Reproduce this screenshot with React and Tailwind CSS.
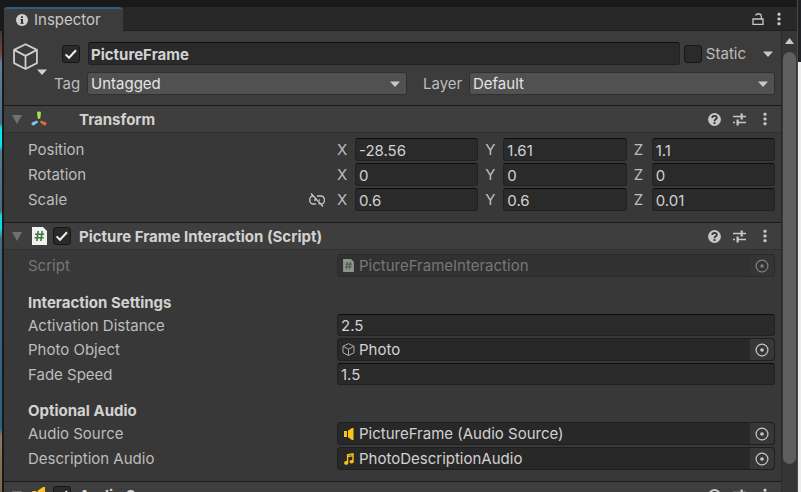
import React from "react";

const fieldBox =
  "rounded-[3px] border border-[#212121] border-t-[#0d0d0d] bg-[#2a2a2a] text-[#d2d2d2]";

function Caret({ className = "" }) {
  return (
    <svg className={"shrink-0 " + className} width="10" height="6" viewBox="0 0 10 6" aria-hidden="true">
      <path d="M0 0.5H10L5 6Z" fill="currentColor" />
    </svg>
  );
}

function Cube({ size, stroke, className = "" }) {
  return (
    <svg className={"shrink-0 " + className} width={size} height={size} viewBox="0 0 26 26" fill="none" stroke="currentColor" strokeWidth={stroke} strokeLinejoin="round" aria-hidden="true">
      <path d="M13 1.2L24 6.6V19.4L13 25L2 19.4V6.6Z" />
      <path d="M2 6.6L13 12.4L24 6.6M13 12.4V25" />
    </svg>
  );
}

function Dots() {
  return (
    <svg width="4" height="14" viewBox="0 0 4 14" fill="currentColor" aria-hidden="true">
      <rect x="0.5" y="0.8" width="3" height="3" rx="1" />
      <rect x="0.5" y="5.5" width="3" height="3" rx="1" />
      <rect x="0.5" y="10.2" width="3" height="3" rx="1" />
    </svg>
  );
}

function ScriptIcon({ width, height, dim }) {
  return (
    <svg className="shrink-0" width={width} height={height} viewBox="0 0 15 18" aria-hidden="true">
      <path d="M0 0H11L15 4V18H0Z" fill={dim ? "#8f948f" : "#eef1ec"} />
      <path d="M6.2 4L4.8 14M10.2 4L8.8 14M3 7.2H12.2M2.6 10.8H11.8" stroke={dim ? "#4d5f50" : "#3c7a45"} strokeWidth="1.6" fill="none" />
    </svg>
  );
}

function Speaker({ width, height }) {
  return (
    <svg className="shrink-0" width={width} height={height} viewBox="0 0 10 12" fill="#fcc419" aria-hidden="true">
      <path d="M0 3H3V9H0Z" />
      <path d="M4 2.8L8 0H9.5V12H8L4 9.2Z" />
    </svg>
  );
}

function Note() {
  return (
    <svg className="shrink-0" width="10" height="12" viewBox="0 0 10 12" aria-hidden="true">
      <path d="M3.6 9.6V1.9L9 0.9V8.6M3.6 3.6L9 2.6" stroke="#fcc419" strokeWidth="1.4" fill="none" />
      <ellipse cx="2.2" cy="9.9" rx="2.1" ry="1.9" fill="#fcc419" />
      <ellipse cx="7.6" cy="8.7" rx="2.1" ry="1.8" fill="#fcc419" />
    </svg>
  );
}

function TransformIcon() {
  return (
    <svg width="16" height="16" viewBox="0 0 16 16" aria-hidden="true">
      <path d="M6 1.6Q6 0.6 8 0.6Q10 0.6 10 1.6L9.2 7.8H6.8Z" fill="#a8e34d" />
      <path d="M5.9 9.4L7.2 11.3L3 14.3Q1.6 14.8 0.7 13.6Q0 12.3 1 11.6Z" fill="#7cc8ee" />
      <path d="M10.1 9.4L8.8 11.3L13 14.3Q14.4 14.8 15.3 13.6Q16 12.3 15 11.6Z" fill="#e2683f" />
    </svg>
  );
}

function Check({ label, checked }) {
  return (
    <label className="grid size-[18px] shrink-0">
      <input
        type="checkbox"
        aria-label={label}
        defaultChecked={checked}
        className="peer col-start-1 row-start-1 size-[18px] appearance-none rounded-[3px] border border-[#171717] bg-[#2a2a2a]"
      />
      <svg className="pointer-events-none invisible col-start-1 row-start-1 size-[18px] peer-checked:visible" viewBox="0 0 18 18" fill="none" stroke="#f0f0f0" strokeWidth="2" aria-hidden="true">
        <path d="M3.6 9.4L7 12.8L14 5.2" />
      </svg>
    </label>
  );
}

function Dropdown({ id, value, className }) {
  return (
    <div className={"grid min-w-0 " + className}>
      <select
        id={id}
        defaultValue={value}
        className="col-start-1 row-start-1 h-[23px] w-full appearance-none rounded-[3px] border border-[#303030] bg-[#515151] pl-[3px] leading-5 text-[#e4e4e4]"
      >
        <option>{value}</option>
      </select>
      <Caret className="pointer-events-none col-start-1 row-start-1 mr-[7px] self-center justify-self-end text-[#c8c8c8]" />
    </div>
  );
}

function Section({ title, icon, enabled, children }) {
  return (
    <section>
      <header className="flex h-7 items-center border-y border-t-[#1a1a1a] border-b-[#303030] bg-[#3e3e3e] pl-2 pr-[14px]">
        <button type="button" aria-label={"Fold " + title} className="text-[#707070]">
          <svg width="10" height="9" viewBox="0 0 10 9" aria-hidden="true">
            <path d="M0 0H10L5 9Z" fill="currentColor" />
          </svg>
        </button>
        <span className="ml-2 flex w-[18px] shrink-0 justify-center">{icon}</span>
        <span className="ml-[5px] w-[26px] shrink-0">
          {enabled && <Check label={"Enable " + title} checked />}
        </span>
        <h2 className="flex-1 pt-px font-bold whitespace-nowrap text-[#d2d2d2]">{title}</h2>
        <div className="flex items-center text-[#c8c8c8]">
          <button type="button" aria-label="Help">
            <svg width="13" height="13" viewBox="0 0 13 13" aria-hidden="true">
              <circle cx="6.5" cy="6.5" r="6.4" fill="currentColor" />
              <path d="M4.2 5C4.2 2.2 8.8 2.2 8.8 4.8C8.8 6.4 6.5 6.3 6.5 8.2" stroke="#333333" strokeWidth="1.8" fill="none" />
              <rect x="5.5" y="9.2" width="2" height="1.8" fill="#333333" />
            </svg>
          </button>
          <button type="button" aria-label="Presets" className="ml-3">
            <svg width="13" height="13" viewBox="0 0 13 13" stroke="currentColor" fill="none" aria-hidden="true">
              <path d="M0 3.5H8M10 3.5H13M0 9.5H2M4.5 9.5H13" strokeWidth="1.5" />
              <path d="M8.7 0.5V6.5M4.6 6.5V12.5" strokeWidth="2.2" />
            </svg>
          </button>
          <button type="button" aria-label={title + " menu"} className="ml-[17px]">
            <Dots />
          </button>
        </div>
      </header>
      {children}
    </section>
  );
}

function Vector({ label, values, unlinked }) {
  return (
    <div className="flex h-[23px] items-center">
      <div className="flex w-[309px] shrink-0 items-center justify-between pr-3">
        <span>{label}</span>
        {unlinked && (
          <button type="button" aria-label="Constrain proportions" className="text-[#c4c4c4]">
            <svg width="16" height="14" viewBox="0 0 16 14" fill="none" stroke="currentColor" strokeWidth="1.4" aria-hidden="true">
              <path d="M5 3H4A3.3 4 0 0 0 4 11H7M8 3H12A3.3 4 0 0 1 12.4 11M9.5 11H10.5M5 7H7M10 7H11M2 0.5L14 13.5" />
            </svg>
          </button>
        )}
      </div>
      <div className="grid flex-1 grid-cols-3 gap-x-[7px]">
        {["X", "Y", "Z"].map((axis, i) => (
          <label key={axis} className="flex min-w-0 items-center">
            <span className="w-[18px] shrink-0">{axis}</span>
            <input
              aria-label={label + " " + axis}
              defaultValue={values[i]}
              className={"h-[23px] w-full min-w-0 flex-1 px-[3px] pt-[2px] " + fieldBox}
            />
          </label>
        ))}
      </div>
    </div>
  );
}

function NumberRow({ id, label, value }) {
  return (
    <div className="flex h-[22px] items-center">
      <label htmlFor={id} className="w-[309px] shrink-0 pt-[2px]">{label}</label>
      <input id={id} defaultValue={value} className={"h-[22px] min-w-0 flex-1 px-[3px] " + fieldBox} />
    </div>
  );
}

function ObjectRow({ label, value, icon, disabled }) {
  return (
    <div className={"flex h-[23px] items-center " + (disabled ? "text-[#777777]" : "")}>
      <span className="w-[309px] shrink-0">{label}</span>
      <div
        className={
          "flex h-[23px] min-w-0 flex-1 items-center rounded-[3px] border " +
          (disabled ? "border-[#2b2b2b] bg-[#313131]" : "border-[#1f1f1f] bg-[#282828] text-[#d2d2d2]")
        }
      >
        <span className="flex w-[21px] shrink-0 justify-center">{icon}</span>
        <span className="flex-1 truncate">{value}</span>
        <button
          type="button"
          disabled={disabled}
          aria-label={"Select " + label}
          className={"flex h-full w-6 items-center justify-center rounded-r-sm " + (disabled ? "bg-[#343434] text-[#808080]" : "bg-[#373737] text-[#c8c8c8]")}
        >
          <svg width="14" height="14" viewBox="0 0 14 14" aria-hidden="true">
            <circle cx="7" cy="7" r="5.9" fill="none" stroke="currentColor" strokeWidth="1.2" />
            <circle cx="7" cy="7" r="1.8" fill="currentColor" />
          </svg>
        </button>
      </div>
    </div>
  );
}

function GroupTitle({ children }) {
  return <h3 className="h-[37px] pt-4 leading-5 font-bold text-[#d2d2d2]">{children}</h3>;
}

export default function App() {
  return (
    <div className="flex h-screen overflow-hidden bg-[#191919] font-['Inter',sans-serif] text-[15px] leading-5 text-[#bdbdbd]">
      <div className="mt-[31px] w-[2px] shrink-0 bg-[linear-gradient(#3a3a3a_0%,#7a4238_5%,#5f8296_7%,#4a6c80_20%,#00e5ee_21%,#00e5ee_25%,#55788c_26%,#4a6c80_39%,#10d8e0_40%,#10d8e0_43%,#456a82_45%,#2d5f80_86%,#8a7a5c_88%,#75694f_100%)]" />
      <div className="flex min-w-0 flex-1 flex-col pt-[7px] pl-[2px]">
        <div className="flex h-6 shrink-0 items-stretch bg-[#282828]">
          <button type="button" className="flex w-[119px] items-center rounded-t-sm border-t-2 border-[#2c5d87] bg-[#3c3c3c] pl-3 text-[#c8c8c8]">
            <svg width="12" height="12" viewBox="0 0 12 12" aria-hidden="true">
              <circle cx="6" cy="6" r="6" fill="#d0d0d0" />
              <path d="M5 2.2H7V4H5ZM4.3 5H7V8.8H7.8V9.8H4.2V8.8H5V6H4.3Z" fill="#333333" />
            </svg>
            <span className="ml-[6px]">Inspector</span>
          </button>
          <div className="flex flex-1 items-center justify-end gap-[13px] border-b border-[#1f1f1f] pr-4 text-[#c8c8c8]">
            <button type="button" aria-label="Lock">
              <svg width="12" height="12" viewBox="0 0 12 12" fill="none" stroke="currentColor" strokeWidth="1.3" aria-hidden="true">
                <path d="M1 6H11V11.3H1ZM9.3 6V3A2 2 0 0 0 7.5 1H5.5A2 2 0 0 0 3.7 2.5" />
              </svg>
            </button>
            <button type="button" aria-label="Inspector menu"><Dots /></button>
          </div>
        </div>

        <div className="flex min-h-0 flex-1">
          <main className="min-w-0 flex-1 overflow-hidden bg-[#383838]">
            <div className="flex h-[74px] bg-[#3c3c3c] pr-[6px]">
              <button type="button" aria-label="Icon" className="mt-3 ml-2 flex h-[34px] w-[35px] shrink-0 items-start text-[#cfcfcf]">
                <Cube size={27} stroke={1.7} />
                <Caret className="-ml-[2px] mb-[2px] self-end" />
              </button>
              <div className="flex min-w-0 flex-1 flex-col gap-[7px] pt-[11px]">
                <div className="flex h-[23px] items-center">
                  <span className="ml-[15px]">
                    <Check label="Active" checked />
                  </span>
                  <input
                    aria-label="Name"
                    defaultValue="PictureFrame"
                    className={"ml-2 h-[23px] min-w-0 flex-1 px-[2px] pt-px font-bold " + fieldBox}
                  />
                  <span className="ml-1">
                    <Check label="Static" />
                  </span>
                  <span className="ml-1">Static</span>
                  <button type="button" aria-label="Static options" className="mr-[2px] ml-[17px] text-[#c8c8c8]">
                    <Caret />
                  </button>
                </div>
                <div className="flex h-[23px] items-center">
                  <label htmlFor="tag" className="ml-[7px] w-[33px] shrink-0">Tag</label>
                  <Dropdown id="tag" value="Untagged" className="flex-[23]" />
                  <label htmlFor="layer" className="ml-4 w-[46px] shrink-0">Layer</label>
                  <Dropdown id="layer" value="Default" className="flex-[22]" />
                </div>
              </div>
            </div>

            <Section title="Transform" icon={<TransformIcon />}>
              <div className="flex flex-col gap-[2px] pt-[5px] pr-[6px] pb-[11px] pl-6">
                <Vector label="Position" values={["-28.56", "1.61", "1.1"]} />
                <Vector label="Rotation" values={["0", "0", "0"]} />
                <Vector label="Scale" values={["0.6", "0.6", "0.01"]} unlinked />
              </div>
            </Section>

            <Section title="Picture Frame Interaction (Script)" icon={<ScriptIcon width={15} height={18} />} enabled>
              <div className="pt-1 pr-[6px] pb-[11px] pl-6">
                <ObjectRow label="Script" value="PictureFrameInteraction" icon={<ScriptIcon width={11} height={13} dim />} disabled />
                <GroupTitle>Interaction Settings</GroupTitle>
                <div className="flex flex-col gap-[2px]">
                  <NumberRow id="distance" label="Activation Distance" value="2.5" />
                  <ObjectRow label="Photo Object" value="Photo" icon={<Cube size={13} stroke={2} className="text-[#aaaaaa]" />} />
                  <NumberRow id="fade" label="Fade Speed" value="1.5" />
                </div>
                <GroupTitle>Optional Audio</GroupTitle>
                <div className="flex flex-col gap-[2px]">
                  <ObjectRow label="Audio Source" value="PictureFrame (Audio Source)" icon={<Speaker width={10} height={12} />} />
                  <ObjectRow label="Description Audio" value="PhotoDescriptionAudio" icon={<Note />} />
                </div>
              </div>
            </Section>

            <Section title="Audio Source" icon={<Speaker width={14} height={16} />} enabled />
          </main>

          <div className="flex w-4 shrink-0 flex-col items-center border-l border-[#2a2a2a] bg-[#353535] pt-[7px] pb-7">
            <svg width="9" height="6" viewBox="0 0 9 6" aria-hidden="true">
              <path d="M4.5 0L9 6H0Z" fill="#c8c8c8" />
            </svg>
            <div className="mt-2 w-[13px] flex-1 rounded-full bg-[#5f5f5f]" />
          </div>
        </div>
      </div>
      <div className="flex w-1 shrink-0 flex-col border-l border-[#4a4a4a]">
        <div className="h-[62px] bg-[#202326]" />
        <div className="flex-1 bg-[#ececec]" />
      </div>
    </div>
  );
}
